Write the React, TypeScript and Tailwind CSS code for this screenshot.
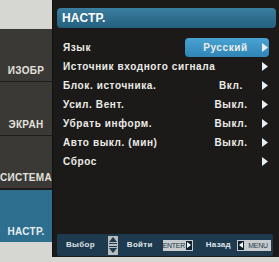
import { ReactNode } from 'react';

const font = { fontFamily: '"Liberation Sans", Arial, sans-serif' };

function Arrow({ className = '' }: { className?: string }) {
  return (
    <svg width="6" height="9" viewBox="0 0 6 9" className={className}>
      <polygon points="0,0 6,4.5 0,9" fill="#e8eef2" />
    </svg>
  );
}

function Tab({ label, active, h }: { label: string; active?: boolean; h: string }) {
  return (
    <div
      className={`${h} flex items-end justify-center pb-[3px] text-[10px] font-bold tracking-[0.3px] ${
        active ? 'bg-[#2e6e8e] text-[#e6eef2]' : 'bg-[#3a3936] text-[#e2e2de]'
      }`}
    >
      {label}
    </div>
  );
}

function Row({ label, value, children }: { label: string; value?: string; children?: ReactNode }) {
  return (
    <div className="h-[19px] flex items-center">
      <span className="flex-1 whitespace-nowrap">{label}</span>
      {children ?? (
        <>
          <span className="w-[38px] text-center">{value}</span>
          <span className="w-[26px] flex justify-end pr-[8px]">
            <Arrow />
          </span>
        </>
      )}
    </div>
  );
}

function KeyArrow({ dir }: { dir: 'left' | 'right' }) {
  return (
    <span className="h-full w-[8px] bg-[#0f2230] border border-[#c9ccce] flex items-center justify-center">
      <svg width="4" height="6" viewBox="0 0 4 6">
        <polygon points={dir === 'right' ? '0,0 4,3 0,6' : '4,0 0,3 4,6'} fill="#fff" />
      </svg>
    </span>
  );
}

export default function App() {
  return (
    <div className="w-[279px] h-[262px] bg-[#d6d6d2] flex" style={font}>
      {/* left tabs */}
      <div className="w-[52px] pt-[29px] flex flex-col">
        <Tab label="ИЗОБР" h="h-[52px]" />
        <div className="h-px bg-[#1e1d1b]" />
        <Tab label="ЭКРАН" h="h-[53px]" />
        <div className="h-px bg-[#1e1d1b]" />
        <Tab label="СИСТЕМА" h="h-[52px]" />
        <div className="h-[2px] bg-[#1e1d1b]" />
        <Tab label="НАСТР." active h="h-[52px]" />
      </div>

      {/* main panel */}
      <div className="w-[227px] h-[257px] bg-[#1b1a18] border-l border-[#111] flex flex-col pl-[4px] pr-[3px] pt-[8px] text-[10px] font-bold tracking-[0.6px] text-[#ecece8]">
        <div className="h-[20px] rounded-[4px] bg-gradient-to-b from-[#3a7ea0] to-[#255f7e] flex items-center pl-[5px] text-[12px] tracking-[0.2px] text-white">
          НАСТР.
        </div>

        <div className="mt-[10px] pl-[6px] flex flex-col">
          <Row label="Язык">
            <div className="w-[84px] h-[19px] mr-[7px] rounded-[4px] bg-gradient-to-b from-[#4aa2d2] to-[#2f86b6] flex items-center">
              <span className="flex-1 text-center pl-[4px]">Русский</span>
              <Arrow className="mr-[1px]" />
            </div>
          </Row>
          <Row label="Источник входного сигнала" />
          <Row label="Блок. источника." value="Вкл." />
          <Row label="Усил. Вент." value="Выкл." />
          <Row label="Убрать информ." value="Выкл." />
          <Row label="Авто выкл. (мин)" value="Выкл." />
          <Row label="Сброс" />
        </div>

        <div className="mt-auto mb-[1px] mr-[3px] h-[22px] bg-[#1e3a4f] rounded-[2px] flex items-center pl-[9px] text-[8px] tracking-[0.3px] text-[#dfe6ea]">
          <span>Выбор</span>
          <div className="ml-[13px] w-[10px] h-[19px] bg-[#b8bcbe] flex flex-col items-center justify-between py-[1px]">
            <svg width="8" height="5" viewBox="0 0 8 5">
              <polygon points="4,0 8,5 0,5" fill="#1e3a4f" />
            </svg>
            <div className="w-[8px] h-[1px] bg-[#1e3a4f]" />
            <div className="w-[8px] h-[1px] bg-[#1e3a4f]" />
            <svg width="8" height="5" viewBox="0 0 8 5">
              <polygon points="0,0 8,0 4,5" fill="#1e3a4f" />
            </svg>
          </div>
          <span className="ml-[9px]">Войти</span>
          <div className="ml-[10px] flex items-center h-[11px]">
            <span className="h-full w-[22px] text-center bg-[#c9ccce] text-[#1e3a4f] text-[7px] leading-[11px] tracking-[-0.3px] font-normal">ENTER</span>
            <KeyArrow dir="right" />
          </div>
          <span className="ml-[13px]">Назад</span>
          <div className="ml-[6px] flex items-center h-[11px]">
            <KeyArrow dir="left" />
            <span className="h-full w-[26px] text-center bg-[#c9ccce] text-[#1e3a4f] text-[7px] leading-[11px] tracking-[-0.3px] font-normal">MENU</span>
          </div>
        </div>
      </div>
    </div>
  );
}
